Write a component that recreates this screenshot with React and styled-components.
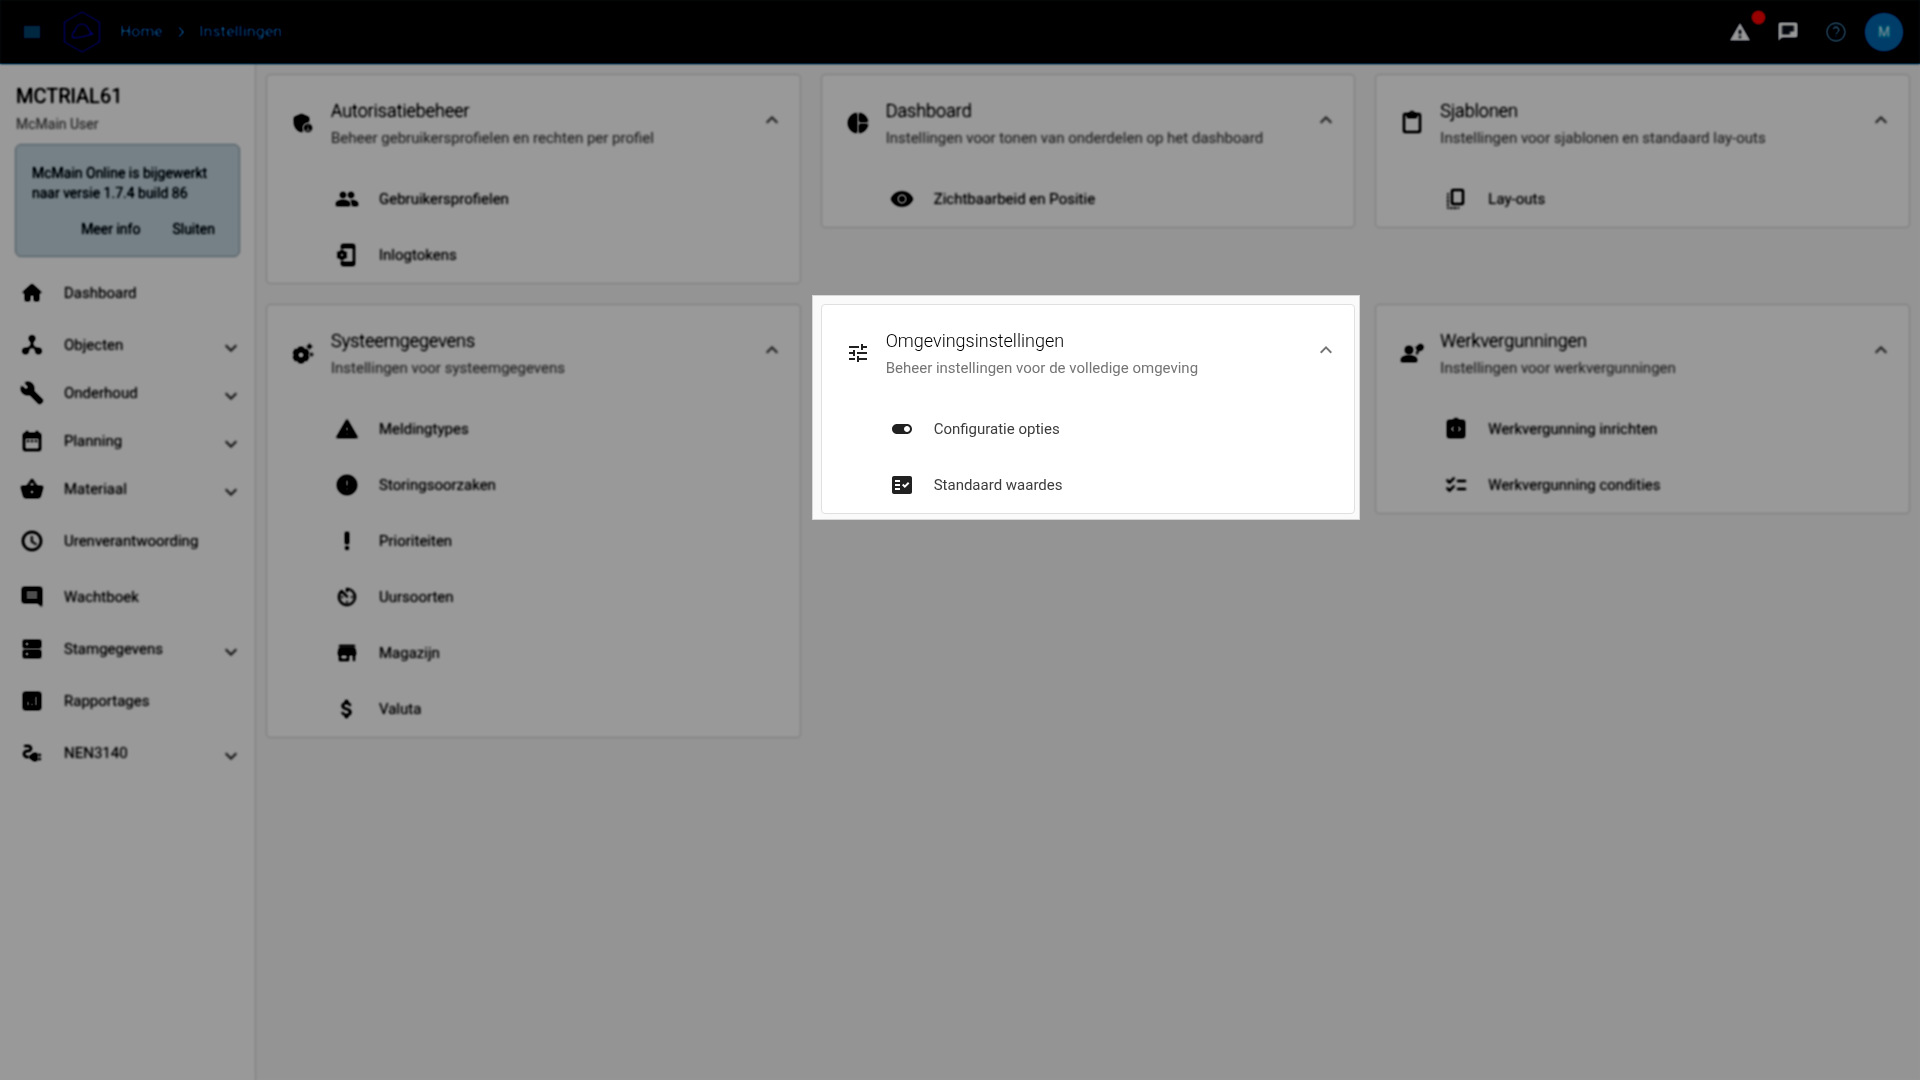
import React from "react";
import styled, { createGlobalStyle, css } from "styled-components";
import {
  MdHome, MdBuild, MdDateRange, MdShoppingBasket, MdSchedule, MdComment, MdDns, MdAnalytics,
  MdElectricalServices, MdAdminPanelSettings, MdGroup, MdPhonelinkSetup, MdPieChart, MdVisibility,
  MdContentPaste, MdCopyAll, MdSettingsSuggest, MdWarning, MdError, MdPriorityHigh, MdAvTimer, MdStore,
  MdAttachMoney, MdTune, MdToggleOn, MdFactCheck, MdIntegrationInstructions,
  MdChecklist, MdExpandMore, MdExpandLess, MdChevronRight, MdChat, MdHelpOutline,
} from "react-icons/md";

const Global = createGlobalStyle`
  *, *::before, *::after { box-sizing: border-box; }
  html, body { margin: 0; min-height: 100%; background: #fafafa; }
  body { font-family: Roboto, "Liberation Sans", sans-serif; font-size: 14px; color: #212121; }
  button { font: inherit; color: inherit; background: none; border: 0; padding: 0; cursor: pointer; }
  a { color: inherit; text-decoration: none; }
  h1, h2, p, ul { margin: 0; padding: 0; font-weight: 400; list-style: none; }
  svg { display: block; flex: none; }
`;

const Shell = styled.div`
  min-height: 100vh;
  display: flex;
  flex-direction: column;
`;

const TopBar = styled.header`
  height: 64px;
  display: flex;
  align-items: center;
  justify-content: space-between;
  padding: 0 16px 0 20px;
  background: #151c26;
  border-bottom: 1px solid #1c78ac;
`;

const BarGroup = styled.div`
  display: flex;
  align-items: center;
  gap: ${(p) => p.$gap}px;
`;

const BarButton = styled.button`
  position: relative;
  && { color: ${(p) => p.$tone}; }
  font-size: 24px;
`;

const Logo = styled.a`
  margin: 0 8px;
  && { color: #4a7cf0; }
`;

const Crumbs = styled.nav`
  display: flex;
  align-items: center;
  gap: 6px;
  font-size: 16px;
  font-weight: 500;
  color: #8cccf4;
`;

const Badge = styled.span`
  position: absolute;
  top: -10px;
  right: -14px;
  width: 15px;
  height: 15px;
  border-radius: 50%;
  background: #ff1a10;
  color: #ffb0a8;
  font-size: 9px;
  line-height: 15px;
  text-align: center;
`;

const Avatar = styled.button`
  width: 40px;
  height: 40px;
  margin-left: -8px;
  border-radius: 50%;
  && { background: #2da0cc; }
  && { color: #eef7fc; }
  && { font-weight: 500; }
`;

const Body = styled.div`
  flex: 1;
  display: flex;
`;

const Sidebar = styled.aside`
  flex: none;
  width: 256px;
  background: #fff;
  border-right: 1px solid #e0e0e0;
`;

const Account = styled.div`
  padding: 20px 16px 10px;
`;

const AccountName = styled.h1`
  font-size: 20px;
  line-height: 24px;
`;

const AccountUser = styled.p`
  padding-top: 6px;
  line-height: 20px;
  color: #757575;
`;

const Notice = styled.section`
  margin: 0 15px 8px;
  padding: 18px 16px 17px;
  border: 1px solid #aab8c0;
  border-radius: 6px;
  background: #dae6ec;
  color: #20262a;
  line-height: 20px;
`;

const NoticeActions = styled.div`
  display: flex;
  justify-content: flex-end;
  gap: 32px;
  padding: 16px 8px 0 0;
`;

const NavLink = styled.a`
  display: flex;
  align-items: center;
  height: ${(p) => (p.$group ? 48 : 56)}px;
  padding: 0 12px 0 20px;
  && { color: #3c3c3c; }
  > svg:first-child { color: #111; }
`;

const NavLabel = styled.span`
  flex: 1;
  padding-left: 20px;
  font-size: 15px;
`;

const NavArrow = styled.span`
  padding-top: 6px;
  color: #6c6c6c;
`;

const Content = styled.main`
  flex: 1;
  display: grid;
  grid-template-columns: repeat(3, minmax(0, 1fr));
  align-content: start;
  align-items: start;
  gap: 20px;
  padding: 10px;
`;

const Slot = styled.div`
  ${(p) =>
    p.$active &&
    css`
      position: relative;
      z-index: 2;
      margin: -9px -5px -6px -9px;
      padding: 8px 4px 5px 8px;
      border: 1px solid #d8d8d8;
      background: #fafafa;
    `}
`;

const Card = styled.section`
  background: #fff;
  border: 1px solid #e0e0e0;
  border-radius: 4px;
`;

const CardHead = styled.header`
  display: flex;
  align-items: center;
  height: 96px;
  padding: 0 16px 0 24px;
  color: #212121;
`;

const CardTexts = styled.div`
  flex: 1;
  padding: 2px 0 0 16px;
`;

const CardTitle = styled.h2`
  font-size: 18px;
  font-weight: 300;
  line-height: 28px;
  color: #000;
`;

const CardSubtitle = styled.p`
  font-size: 15px;
  line-height: 26px;
  color: #757575;
`;

const Toggle = styled.button`
  && { padding-bottom: 6px; }
  && { color: #757575; }
`;

const CardLink = styled.a`
  display: flex;
  align-items: center;
  gap: 20px;
  height: 56px;
  padding-left: 68px;
  font-size: 15px;
  && { color: #3c3c3c; }
  > svg { color: #212121; }
`;

const Backdrop = styled.div`
  position: fixed;
  inset: 0;
  z-index: 1;
  background: rgba(0, 0, 0, 0.4);
  backdrop-filter: blur(1px) brightness(0.727) contrast(2.2);
`;

const HubIcon = ({ size }) => (
  <svg width={size} height={size} viewBox="0 0 24 24" fill="currentColor" aria-hidden="true">
    <path d="M12 6v7M12 13l-7 5M12 13l7 5" stroke="currentColor" strokeWidth="2" />
    <circle cx="12" cy="5.5" r="3" />
    <circle cx="5.5" cy="18" r="3" />
    <circle cx="18.5" cy="18" r="3" />
  </svg>
);

const WorkerIcon = ({ size }) => (
  <svg width={size} height={size} viewBox="0 0 24 24" fill="currentColor" aria-hidden="true">
    <circle cx="9" cy="9" r="4" />
    <path d="M9 14.500c-3 0-8 1.400-8 4V21h16v-2.500c0-2.600-5-4-8-4z" />
    <path d="M17 12.500 18 9.500M16.500 6.500l3 1.500" fill="none" stroke="currentColor" strokeWidth="2" strokeLinecap="round" />
    <path d="M18 4l3-1 2.500 2-.5 3-2.500 2-2.500-2z" />
  </svg>
);

const MenuIcon = () => (
  <svg width="24" height="24" viewBox="0 0 24 24" fill="currentColor" aria-hidden="true">
    <path d="M3 5h18v14H3z" />
  </svg>
);

const LogoMark = () => (
  <svg width="40" height="44" viewBox="0 0 40 44" fill="none" stroke="currentColor" strokeWidth="2" aria-hidden="true">
    <path d="M20 2 37.500 12v20L20 42 2.500 32V12z" strokeLinejoin="round" />
    <path d="M11 28c-2-3 0-6 2-7 2-9 11-9 14-1 1 2 2 3 4 4" strokeLinecap="round" />
    <path d="M11 28c6 0 13-2 20-4" strokeLinecap="round" />
  </svg>
);

const NAV = [
  { label: "Dashboard", icon: MdHome },
  { label: "Objecten", icon: HubIcon, group: true },
  { label: "Onderhoud", icon: MdBuild, group: true },
  { label: "Planning", icon: MdDateRange, group: true },
  { label: "Materiaal", icon: MdShoppingBasket, group: true },
  { label: "Urenverantwoording", icon: MdSchedule },
  { label: "Wachtboek", icon: MdComment },
  { label: "Stamgegevens", icon: MdDns, group: true },
  { label: "Rapportages", icon: MdAnalytics },
  { label: "NEN3140", icon: MdElectricalServices, group: true },
];

const CARDS = [
  {
    title: "Autorisatiebeheer", subtitle: "Beheer gebruikersprofielen en rechten per profiel", icon: MdAdminPanelSettings,
    items: [["Gebruikersprofielen", MdGroup], ["Inlogtokens", MdPhonelinkSetup]],
  },
  {
    title: "Dashboard", subtitle: "Instellingen voor tonen van onderdelen op het dashboard", icon: MdPieChart,
    items: [["Zichtbaarbeid en Positie", MdVisibility]],
  },
  {
    title: "Sjablonen", subtitle: "Instellingen voor sjablonen en standaard lay-outs", icon: MdContentPaste,
    items: [["Lay-outs", MdCopyAll]],
  },
  {
    title: "Systeemgegevens", subtitle: "Instellingen voor systeemgegevens", icon: MdSettingsSuggest,
    items: [
      ["Meldingtypes", MdWarning], ["Storingsoorzaken", MdError], ["Prioriteiten", MdPriorityHigh],
      ["Uursoorten", MdAvTimer], ["Magazijn", MdStore], ["Valuta", MdAttachMoney],
    ],
  },
  {
    title: "Omgevingsinstellingen", subtitle: "Beheer instellingen voor de volledige omgeving", icon: MdTune, active: true,
    items: [["Configuratie opties", MdToggleOn], ["Standaard waardes", MdFactCheck]],
  },
  {
    title: "Werkvergunningen", subtitle: "Instellingen voor werkvergunningen", icon: WorkerIcon,
    items: [["Werkvergunning inrichten", MdIntegrationInstructions], ["Werkvergunning condities", MdChecklist]],
  },
];

function SettingsCard({ title, subtitle, icon: Icon, items, active }) {
  return (
    <Slot $active={active}>
      <Card>
        <CardHead>
          <Icon size={24} />
          <CardTexts>
            <CardTitle>{title}</CardTitle>
            <CardSubtitle>{subtitle}</CardSubtitle>
          </CardTexts>
          <Toggle type="button" aria-label={title}><MdExpandLess size={24} /></Toggle>
        </CardHead>
        <ul>
          {items.map(([label, ItemIcon]) => (
            <li key={label}>
              <CardLink href="#"><ItemIcon size={24} />{label}</CardLink>
            </li>
          ))}
        </ul>
      </Card>
    </Slot>
  );
}

export default function App() {
  return (
    <Shell>
      <Global />
      <TopBar>
        <BarGroup $gap={10}>
          <BarButton type="button" aria-label="Menu" $tone="#2a89a3"><MenuIcon /></BarButton>
          <Logo href="#" aria-label="McMain"><LogoMark /></Logo>
          <Crumbs>
            <a href="#">Home</a>
            <MdChevronRight size={24} />
            <a href="#">Instellingen</a>
          </Crumbs>
        </BarGroup>
        <BarGroup $gap={24}>
          <BarButton type="button" aria-label="Waarschuwingen" $tone="#fff"><MdWarning /><Badge>11</Badge></BarButton>
          <BarButton type="button" aria-label="Berichten" $tone="#fff"><MdChat /></BarButton>
          <BarButton type="button" aria-label="Help" $tone="#bfe0f2"><MdHelpOutline /></BarButton>
          <Avatar type="button">M</Avatar>
        </BarGroup>
      </TopBar>
      <Body>
        <Sidebar>
          <Account>
            <AccountName>MCTRIAL61</AccountName>
            <AccountUser>McMain User</AccountUser>
          </Account>
          <Notice>
            <p>McMain Online is bijgewerkt naar versie 1.7.4 build 86</p>
            <NoticeActions>
              <button type="button">Meer info</button>
              <button type="button">Sluiten</button>
            </NoticeActions>
          </Notice>
          <nav>
            {NAV.map(({ label, icon: Icon, group }) => (
              <NavLink key={label} href="#" $group={group}>
                <Icon size={24} />
                <NavLabel>{label}</NavLabel>
                {group && <NavArrow><MdExpandMore size={24} /></NavArrow>}
              </NavLink>
            ))}
          </nav>
        </Sidebar>
        <Content>
          {CARDS.map((card) => <SettingsCard key={card.title} {...card} />)}
        </Content>
      </Body>
      <Backdrop />
    </Shell>
  );
}
